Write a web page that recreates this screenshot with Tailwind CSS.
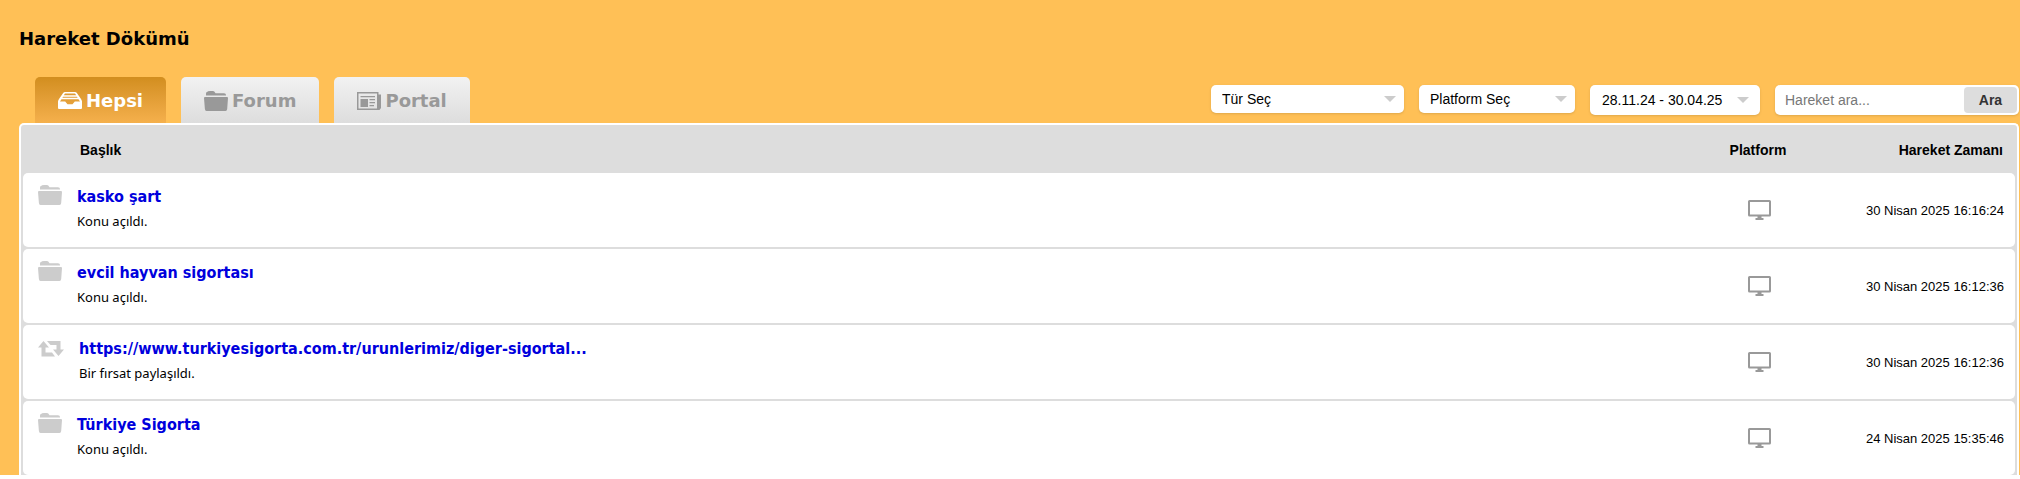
<!DOCTYPE html>
<html lang="tr">
<head>
<meta charset="utf-8">
<title>Hareket Dökümü</title>
<script src="https://cdn.jsdelivr.net/npm/@tailwindcss/browser@4"></script>
</head>
<body class="bg-white font-['Liberation_Sans',Arial,sans-serif] text-sm text-black">
<svg class="hidden" aria-hidden="true">
  <symbol id="folder" viewBox="0 0 24 20"><path d="M2 5V2.500Q2 1 3.500 .8L4 .3Q5 0 6 0H9Q10.500 0 11 1.500L11.500 2.300H20Q22 2.300 22 4V4.600H2ZM1 6H23Q24 6 24 7L23.200 18Q23 20 21.500 20H2.500Q1 20 .9 18L0 7Q0 6 1 6Z"/></symbol>
  <symbol id="tray" viewBox="0 0 24 18"><path fill-rule="evenodd" d="M7 0H17Q18 0 18.700.7L23 7Q24 8.500 24 9.500V16Q24 17 23 17H1Q0 17 0 16V9.500Q0 8.500 1 7L5.300.7Q6 0 7 0ZM7 1.500L5.800 3.300H18.200L17 1.500ZM5 4.700L4.400 5.700H19.600L19 4.700ZM3.500 7.200L2 9.500H7.200L9.500 12.200H14.500L16.800 9.500H22L20.500 7.200Z"/></symbol>
  <symbol id="news" viewBox="0 0 24 18"><path fill-rule="evenodd" d="M0 0H21.500V2.500H24V16L22.500 18H0ZM1.500 1.500V16.500H20V1.500ZM3.500 4H18V5.300H3.500ZM3.500 7H11V15H3.500ZM12.500 7H18V8.300H12.500ZM12.500 10H18V11.300H12.500ZM12.500 13H17V14.300H12.500Z"/></symbol>
  <symbol id="repost" viewBox="0 0 26 20"><path d="M5.500 4L11 10.500H7.500V15.500H14L17 19.500H3.500V10.500H0ZM9 4H22.500V12.500H26L20.500 19L15 12.500H18.500V8H12.500Z"/></symbol>
  <symbol id="monitor" viewBox="0 0 23 20"><path fill-rule="evenodd" d="M1.500 0H21.500Q23 0 23 1.500V15Q23 16.500 21.500 16.500H13.500V18H15.500V20H7.500V18H9.500V16.500H1.500Q0 16.500 0 15V1.500Q0 0 1.500 0ZM2 2V14.500H21V2Z"/></symbol>
</svg>
<main class="overflow-hidden bg-[#ffc056] pl-[19px] pr-px">
  <h1 class="pt-[27px] font-['DejaVu_Sans',Verdana,sans-serif] text-lg leading-6 font-bold">Hareket Dökümü</h1>
  <div class="mt-[26px] flex items-start justify-between">
    <nav class="ml-4 flex gap-[15px] font-['DejaVu_Sans',Verdana,sans-serif] text-lg leading-6 font-bold text-[#999]">
      <a href="#hepsi" aria-current="page" class="flex h-[46px] items-center gap-1 rounded-t-[5px] bg-linear-to-b from-[#d28e1e] to-[#f5b04c] px-[23px] pt-[2px] text-white"><svg class="h-[18px] w-6 fill-current"><use href="#tray"/></svg>Hepsi</a>
      <a href="#forum" class="flex h-[46px] items-center gap-1 rounded-t-[5px] bg-linear-to-b from-[#f2f2f2] to-[#ddd] px-[23px] pt-[2px]"><svg class="h-5 w-6 fill-current"><use href="#folder"/></svg>Forum</a>
      <a href="#portal" class="flex h-[46px] items-center gap-1 rounded-t-[5px] bg-linear-to-b from-[#f2f2f2] to-[#ddd] px-[23px] pt-[2px]"><svg class="h-[18px] w-6 fill-current"><use href="#news"/></svg>Portal</a>
    </nav>
    <form class="mt-2 flex items-start gap-[15px]">
      <div class="flex h-7 items-center rounded-[5px] bg-white pr-2 shadow-sm">
        <select aria-label="Tür" class="h-full w-[173px] appearance-none pl-[11px]"><option>Tür Seç</option></select>
        <svg class="h-[6px] w-3 fill-[#ccc]" viewBox="0 0 12 6"><path d="M0 0H12L6 6Z"/></svg>
      </div>
      <div class="flex h-7 items-center rounded-[5px] bg-white pr-2 shadow-sm">
        <select aria-label="Platform" class="h-full w-[136px] appearance-none pl-[11px]"><option>Platform Seç</option></select>
        <svg class="h-[6px] w-3 fill-[#ccc]" viewBox="0 0 12 6"><path d="M0 0H12L6 6Z"/></svg>
      </div>
      <button type="button" class="flex h-[30px] w-[170px] items-center justify-between rounded-[5px] bg-white pr-[11px] pl-3 shadow-sm">28.11.24 - 30.04.25<svg class="h-[6px] w-3 fill-[#ccc]" viewBox="0 0 12 6"><path d="M0 0H12L6 6Z"/></svg></button>
      <div class="flex h-[30px] w-[244px] rounded-[5px] bg-white p-[2px] shadow-sm">
        <input type="search" aria-label="Hareket ara" placeholder="Hareket ara..." class="min-w-0 flex-1 pl-2 placeholder:text-[#777]">
        <button type="submit" class="w-[53px] rounded-[4px] bg-[#ddd] font-bold text-[#333]">Ara</button>
      </div>
    </form>
  </div>
  <section class="overflow-hidden rounded-t-[5px] border-2 border-b-0 border-white bg-[#ddd] px-[2px]">
    <table class="-mb-[2px] w-full border-separate border-spacing-x-0 border-spacing-y-[2px]">
      <thead>
        <tr class="h-11">
          <th class="pt-[2px] pl-[57px] text-left">Başlık</th>
          <th class="w-[120px] pt-[2px]">Platform</th>
          <th class="w-[197px] pt-[2px] pr-3 text-right">Hareket Zamanı</th>
        </tr>
      </thead>
      <tbody>
        <tr class="h-[74px]">
          <td class="rounded-l-[5px] bg-white pt-3 pl-[15px] align-top"><div class="flex gap-[15px]"><svg class="h-5 w-6 fill-[#ccc]"><use href="#folder"/></svg><div><a href="#k1" class="block font-['DejaVu_Sans_Condensed',Tahoma,sans-serif] text-base leading-6 font-bold text-[#0000dd]">kasko şart</a><p class="font-['Noto_Sans',Tahoma,sans-serif] text-[13px] leading-6">Konu açıldı.</p></div></div></td>
          <td class="bg-white pl-[2px]"><svg class="mx-auto h-5 w-[23px] fill-[#999]" role="img" aria-label="Masaüstü"><use href="#monitor"/></svg></td>
          <td class="rounded-r-[5px] bg-white pt-[2px] pr-[11px] text-right text-[13px]">30 Nisan 2025 16:16:24</td>
        </tr>
        <tr class="h-[74px]">
          <td class="rounded-l-[5px] bg-white pt-3 pl-[15px] align-top"><div class="flex gap-[15px]"><svg class="h-5 w-6 fill-[#ccc]"><use href="#folder"/></svg><div><a href="#k2" class="block font-['DejaVu_Sans_Condensed',Tahoma,sans-serif] text-base leading-6 font-bold text-[#0000dd]">evcil hayvan sigortası</a><p class="font-['Noto_Sans',Tahoma,sans-serif] text-[13px] leading-6">Konu açıldı.</p></div></div></td>
          <td class="bg-white pl-[2px]"><svg class="mx-auto h-5 w-[23px] fill-[#999]" role="img" aria-label="Masaüstü"><use href="#monitor"/></svg></td>
          <td class="rounded-r-[5px] bg-white pt-[2px] pr-[11px] text-right text-[13px]">30 Nisan 2025 16:12:36</td>
        </tr>
        <tr class="h-[74px]">
          <td class="rounded-l-[5px] bg-white pt-3 pl-[15px] align-top"><div class="flex gap-[15px]"><svg class="h-5 w-[26px] fill-[#ccc]"><use href="#repost"/></svg><div><a href="#k3" class="block font-['DejaVu_Sans_Condensed',Tahoma,sans-serif] text-base leading-6 font-bold text-[#0000dd]">https://www.turkiyesigorta.com.tr/urunlerimiz/diger-sigortal...</a><p class="font-['Noto_Sans',Tahoma,sans-serif] text-[13px] leading-6">Bir fırsat paylaşıldı.</p></div></div></td>
          <td class="bg-white pl-[2px]"><svg class="mx-auto h-5 w-[23px] fill-[#999]" role="img" aria-label="Masaüstü"><use href="#monitor"/></svg></td>
          <td class="rounded-r-[5px] bg-white pt-[2px] pr-[11px] text-right text-[13px]">30 Nisan 2025 16:12:36</td>
        </tr>
        <tr class="h-[74px]">
          <td class="rounded-l-[5px] bg-white pt-3 pl-[15px] align-top"><div class="flex gap-[15px]"><svg class="h-5 w-6 fill-[#ccc]"><use href="#folder"/></svg><div><a href="#k4" class="block font-['DejaVu_Sans_Condensed',Tahoma,sans-serif] text-base leading-6 font-bold text-[#0000dd]">Türkiye Sigorta</a><p class="font-['Noto_Sans',Tahoma,sans-serif] text-[13px] leading-6">Konu açıldı.</p></div></div></td>
          <td class="bg-white pl-[2px]"><svg class="mx-auto h-5 w-[23px] fill-[#999]" role="img" aria-label="Masaüstü"><use href="#monitor"/></svg></td>
          <td class="rounded-r-[5px] bg-white pt-[2px] pr-[11px] text-right text-[13px]">24 Nisan 2025 15:35:46</td>
        </tr>
      </tbody>
    </table>
  </section>
</main>
</body>
</html>
